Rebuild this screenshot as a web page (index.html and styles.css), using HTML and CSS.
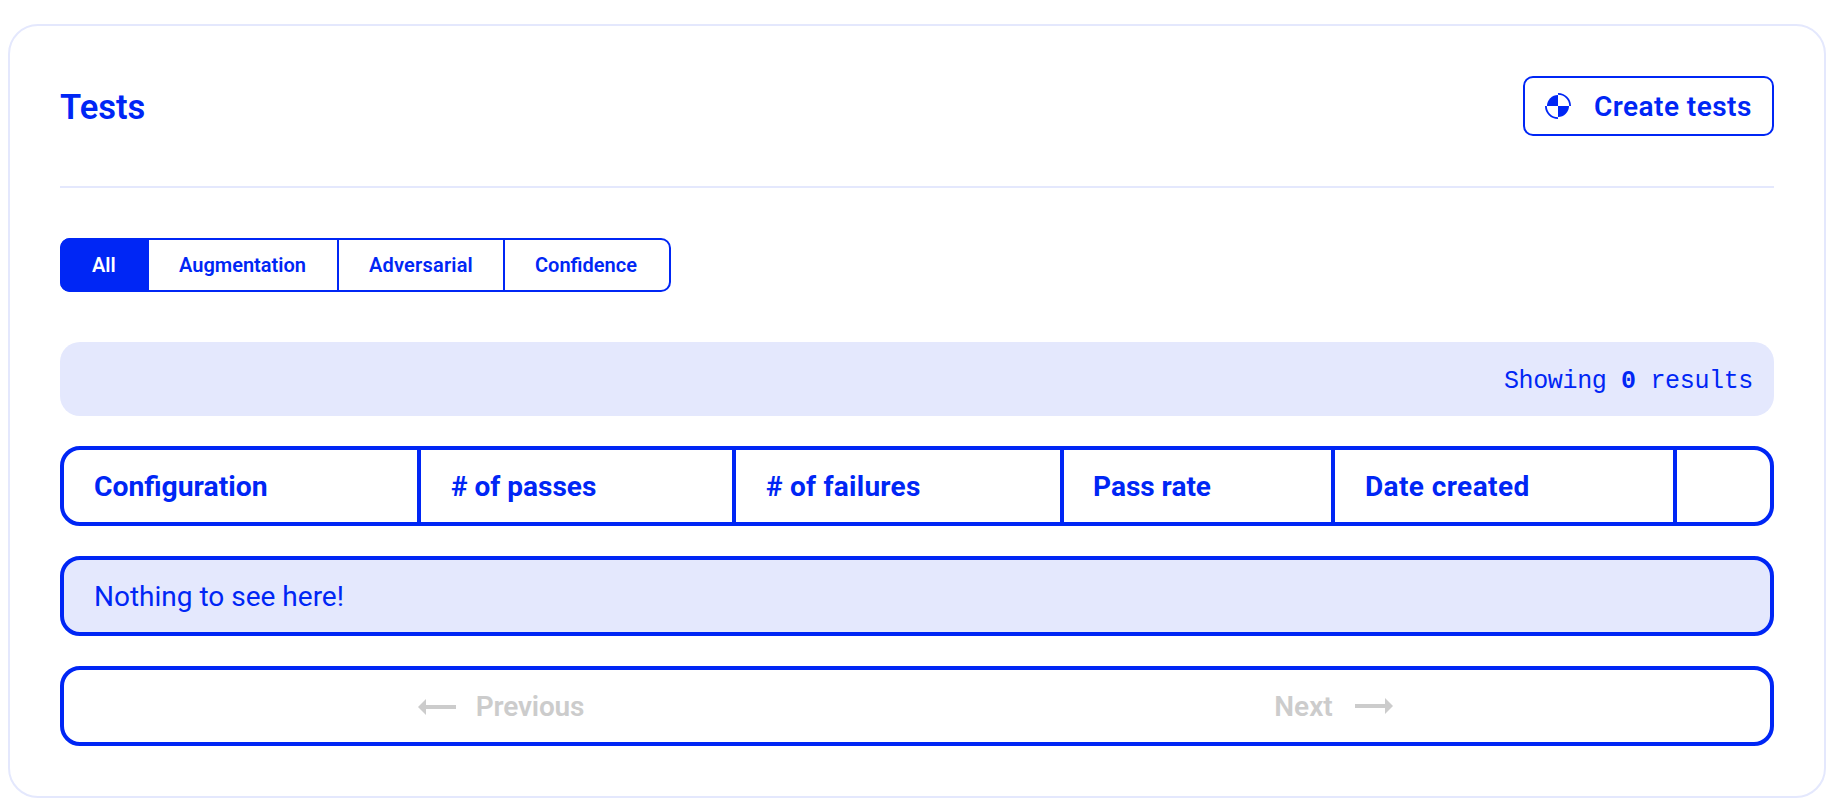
FILE: index.html
```
<!DOCTYPE html>
<html lang="en">
<head>
  <meta charset="utf-8">
  <title>Tests</title>
  <link rel="stylesheet" href="styles.css">
</head>
<body>
  <main class="card">
    <header class="card-header">
      <h1>Tests</h1>
      <button class="create-button" type="button">
        <svg width="26" height="26" viewBox="0 0 26 26" fill="currentColor">
          <path d="M13 13V2A11 11 0 0 0 2 13z"/>
          <path d="M13 13v11a11 11 0 0 0 11-11z"/>
          <path d="M13 0a13 13 0 0 1 13 13h-1.8A11.2 11.2 0 0 0 13 1.8z"/>
          <path d="M13 26A13 13 0 0 1 0 13h1.8A11.2 11.2 0 0 0 13 24.2z"/>
        </svg>
        <span>Create tests</span>
      </button>
    </header>

    <nav class="tabs">
      <button class="tab tab-all active" type="button">All</button>
      <button class="tab tab-augmentation" type="button">Augmentation</button>
      <button class="tab tab-adversarial" type="button">Adversarial</button>
      <button class="tab tab-confidence" type="button">Confidence</button>
    </nav>

    <div class="results">Showing <strong>0</strong> results</div>

    <div class="row table-head">
      <div class="cell configuration">Configuration</div>
      <div class="cell">#&nbsp;of passes</div>
      <div class="cell failures">#&nbsp;of failures</div>
      <div class="cell pass-rate">Pass rate</div>
      <div class="cell created">Date created</div>
      <div class="cell"></div>
    </div>

    <div class="row empty">Nothing to see here!</div>

    <div class="row pager">
      <button class="previous" type="button" disabled>
        <svg width="38" height="16" viewBox="0 0 38 16" fill="currentColor">
          <path d="M0 8l8-8v6h30v4H8v6z"/>
        </svg>
        <span>Previous</span>
      </button>
      <button class="next" type="button" disabled>
        <span>Next</span>
        <svg width="38" height="16" viewBox="0 0 38 16" fill="currentColor">
          <path d="M38 8l-8-8v6H0v4h30v6z"/>
        </svg>
      </button>
    </div>
  </main>
</body>
</html>
```
FILE: styles.css
```
* {
  box-sizing: border-box;
}

body {
  margin: 24px 14px 14px 8px;
  background: #fff;
  color: #0026f5;
  font-family: Roboto, sans-serif;
  font-size: 28px;
}

button {
  padding: 0;
  border: none;
  background: none;
  color: inherit;
  font: inherit;
}

.card {
  height: 774px;
  padding: 50px;
  border: 2px solid #e4e8fd;
  border-radius: 30px;
}

.card-header {
  display: flex;
  align-items: flex-start;
  justify-content: space-between;
  height: 112px;
  border-bottom: 2px solid #e4e8fd;
}

h1 {
  margin: 0;
  font-size: 34.5px;
  font-weight: 600;
  line-height: 63px;
}

.create-button {
  display: flex;
  align-items: center;
  gap: 23px;
  width: 251px;
  height: 60px;
  padding-left: 20px;
  border: 2px solid #0026f5;
  border-radius: 10px;
  font-weight: 600;
  letter-spacing: 0.45px;
  white-space: nowrap;
}

/* filter tabs */
.tabs {
  display: flex;
  width: 611px;
  height: 54px;
  margin-top: 50px;
  border: 2px solid #0026f5;
  border-radius: 10px;
  font-size: 20px;
  font-weight: 600;
}

.tab {
  padding-left: 30px;
  text-align: left;
}

.tab.active {
  background: #0026f5;
  color: #fff;
}

.tab-all {
  width: 89px;
  margin: -2px 0 -2px -2px;
  padding-left: 32px;
  border-radius: 10px 0 0 10px;
}

.tab-augmentation {
  width: 190px;
  border-right: 2px solid #0026f5;
}

.tab-adversarial {
  width: 166px;
  border-right: 2px solid #0026f5;
  letter-spacing: 0.2px;
}

.results {
  height: 74px;
  margin-top: 50px;
  padding: 3px 21px 0 0;
  border-radius: 20px;
  background: #e4e8fd;
  font-family: "Liberation Mono", monospace;
  font-size: 25px;
  letter-spacing: -0.35px;
  line-height: 73px;
  text-align: right;
}

/* table rows */
.row {
  height: 80px;
  margin-top: 30px;
  border: 4px solid #0026f5;
  border-radius: 20px;
  line-height: 74px;
}

.table-head {
  display: grid;
  grid-template-columns: 357px 315px 328px 271px 342px 1fr;
  grid-template-rows: 72px;
  font-weight: 700;
}

.cell {
  padding-left: 30px;
  border-right: 4px solid #0026f5;
}

.cell:last-child {
  border-right: none;
}

.configuration {
  font-size: 28.3px;
}

.failures {
  letter-spacing: 0.25px;
}

.pass-rate {
  padding-left: 29px;
}

.created {
  letter-spacing: 0.4px;
}

.empty {
  padding-left: 30px;
  background: #e4e8fd;
}

.pager {
  display: grid;
  grid-template-columns: 1fr 1fr;
  grid-template-rows: 72px;
}

.pager button {
  display: flex;
  align-items: center;
  justify-content: center;
  gap: 20px;
  color: #ccc;
  font-weight: 600;
}

.pager span {
  padding-top: 2px;
}

.pager .previous {
  padding-left: 21px;
}

.previous span {
  letter-spacing: -0.15px;
}

.pager .next {
  gap: 22px;
  padding-right: 20px;
}

.previous svg {
  margin-top: 2px;
}
```
